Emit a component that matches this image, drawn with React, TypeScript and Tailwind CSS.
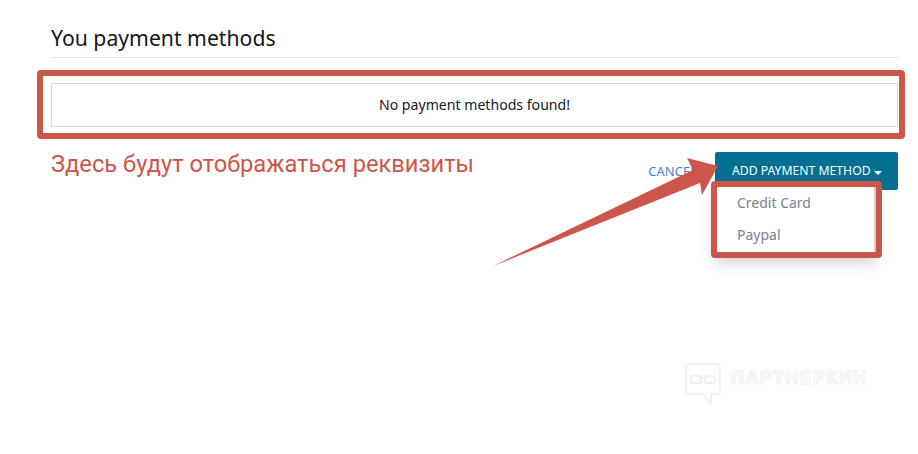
const App = () => {
  return (
    <div className="relative w-[918px] h-[454px] bg-white overflow-hidden font-['Noto_Sans',sans-serif]">
      <main className="pl-[51px] pr-5 pt-6">
        {/* Page title */}
        <h2 className="h-[34px] border-b border-[#e4e4e4] text-[21.2px] leading-[28px] text-[#16161d]">You payment methods</h2>

        {/* Empty list */}
        <div className="relative mt-[25px] h-[44px] border border-[#d8d8d8] flex items-center justify-center text-[14.1px] text-[#17171f]">
          No payment methods found!
          <div className="absolute -left-[15px] -right-[8px] -top-[14px] -bottom-[13px] border-[6px] border-[#cd564a] rounded-[4px]" />
        </div>

        {/* Actions */}
        <div className="mt-[25px] flex items-start justify-between">
          <p className="-mt-[3px] text-[23.7px] leading-[30px] text-[#cd564a] font-['Roboto',sans-serif]">Здесь будут отображаться реквизиты</p>
          <div className="flex items-center gap-[18px]">
            <a className="pt-[1px] text-[13px] text-[#4a82bf]">CANCEL</a>
            <div className="relative">
              <button className="h-[38px] w-[183px] pl-[17px] pt-[1px] flex items-center gap-[3px] rounded-[2px] bg-[#036f92] text-[12.2px] text-white">
                ADD PAYMENT METHOD
                <span className="mt-[2px] border-x-[4px] border-t-[4px] border-x-transparent border-t-white" />
              </button>
              <div className="absolute left-0 top-[35px] w-[161px] h-[70px] pl-[22px] bg-white border-r-2 border-[#cfcfd4] shadow-[0_6px_14px_rgba(0,0,0,0.18)] text-[14px] text-[#7b8094]">
                <div className="h-[32px] leading-[32px]">Credit Card</div>
                <div className="h-[32px] leading-[32px]">Paypal</div>
              </div>
              <div className="absolute -left-[4px] top-[29px] w-[171px] h-[77px] border-[6px] border-[#cd564a] rounded-[4px]" />
            </div>
          </div>
        </div>
      </main>

      {/* Annotation arrow */}
      <svg className="absolute left-0 top-0" width="918" height="454" viewBox="0 0 918 454" fill="none">
        <polygon points="493,266 693,170 687,158 718,166 702,195 700,183" fill="#cd564a" />
      </svg>

      {/* Watermark */}
      <div className="absolute left-[685px] top-[363px] flex items-start gap-[10px]">
        <svg width="36" height="42" viewBox="0 0 36 42" fill="none" stroke="#f1f1f1" strokeWidth="2">
          <path d="M4 1h28a3 3 0 0 1 3 3v24a3 3 0 0 1-3 3h-6v9l-8-9H4a3 3 0 0 1-3-3V4a3 3 0 0 1 3-3z" />
          <rect x="6" y="13" width="10" height="7" rx="2" />
          <rect x="20" y="13" width="10" height="7" rx="2" />
          <path d="M16 15h4" />
        </svg>
        <span className="mt-[4px] text-[18px] leading-[22px] font-bold tracking-[1.4px] text-transparent [-webkit-text-stroke:1px_#f0f0f0] font-['Liberation_Sans',sans-serif]">ПАРТНЕРКИН</span>
      </div>
    </div>
  )
}

export default App
